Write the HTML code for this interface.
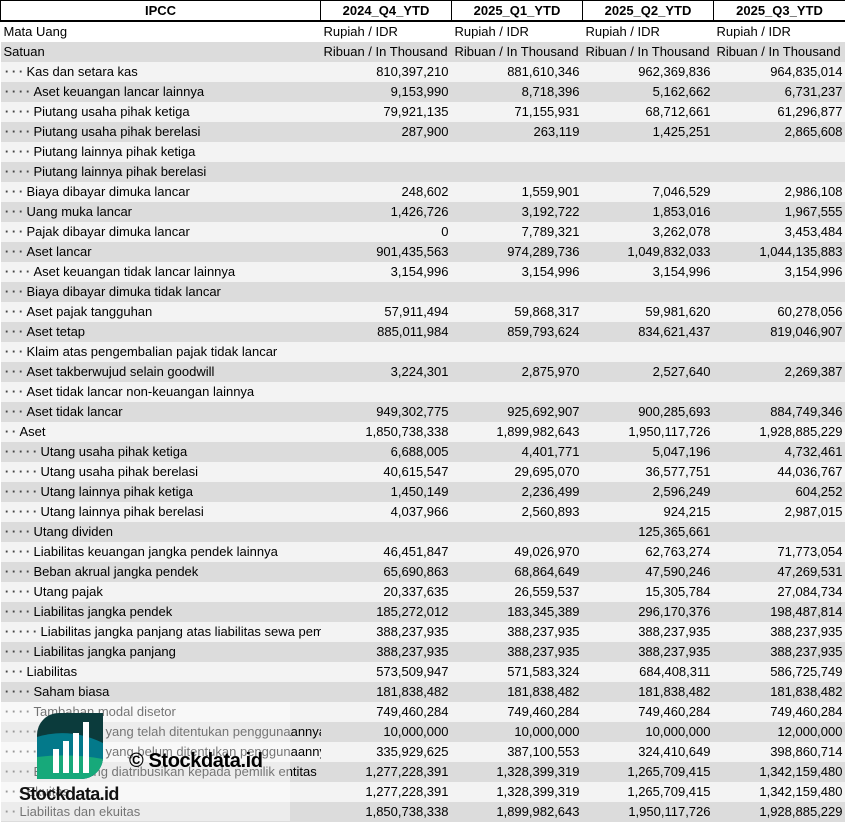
<!DOCTYPE html>
<html><head><meta charset="utf-8"><style>
*{margin:0;padding:0;box-sizing:border-box}
body{width:845px;height:821px;overflow:hidden;background:#fff;font-family:"Liberation Sans",Arial,sans-serif;font-size:13px;color:#000;position:relative}
table{border-collapse:collapse;table-layout:fixed;width:845px}
td{height:20px;white-space:nowrap;overflow:hidden;padding:0 3px;line-height:20px}
td.n{text-align:right}
tr.h td{font-weight:bold;text-align:center;border:1px solid #000;border-bottom:2px solid #000;height:20px;line-height:17px;background:#fff}
tr.l td{background:#f3f3f3}
tr.w td{background:#fff}
tr.g td{background:#dcdcdc}
.d{display:inline-block;width:7px;text-align:center;font-weight:bold;color:#444}
.t{margin-left:2px}
#ov{position:absolute;left:0;top:702px;width:290px;height:119px;background:rgba(255,255,255,0.45)}
</style></head><body>
<table>
<colgroup><col style="width:320px"><col style="width:131px"><col style="width:131px"><col style="width:131px"><col style="width:132px"></colgroup>
<tr class="h"><td>IPCC</td><td>2024_Q4_YTD</td><td>2025_Q1_YTD</td><td>2025_Q2_YTD</td><td>2025_Q3_YTD</td></tr>
<tr class="w"><td>Mata Uang</td><td>Rupiah / IDR</td><td>Rupiah / IDR</td><td>Rupiah / IDR</td><td>Rupiah / IDR</td></tr>
<tr class="g"><td>Satuan</td><td>Ribuan / In Thousand</td><td>Ribuan / In Thousand</td><td>Ribuan / In Thousand</td><td>Ribuan / In Thousand</td></tr>
<tbody id="b"></tbody>
</table>
<div id="ov"></div>
<svg style="position:absolute;left:37px;top:713px" width="66" height="66" viewBox="0 0 66 66">
<defs><clipPath id="c"><path d="M22 0H66V44A22 22 0 0 1 44 66H0V22A22 22 0 0 1 22 0Z"/></clipPath></defs>
<g clip-path="url(#c)">
<rect width="66" height="66" fill="#0b3b3c"/>
<path d="M0 24Q33 14 66 30V66H0Z" fill="#03798a"/>
<path d="M0 44Q33 40 66 46V66H0Z" fill="#17a97a"/>
</g>
<rect x="16" y="36" width="6" height="24" fill="#fff"/>
<rect x="26" y="28" width="6" height="32" fill="#fff"/>
<rect x="36" y="20" width="6" height="40" fill="#fff"/>
<rect x="46" y="9" width="6" height="51" fill="#fff"/>
</svg>
<div style="position:absolute;left:129px;top:750px;font-size:20px;font-weight:bold;color:#000;letter-spacing:-0.4px">© Stockdata.id</div>
<div style="position:absolute;left:19px;top:784px;font-size:18px;font-weight:bold;color:#111;letter-spacing:-0.6px">Stockdata.id</div>
<script>
var R=[
[3,"Kas dan setara kas","810,397,210","881,610,346","962,369,836","964,835,014"],
[4,"Aset keuangan lancar lainnya","9,153,990","8,718,396","5,162,662","6,731,237"],
[4,"Piutang usaha pihak ketiga","79,921,135","71,155,931","68,712,661","61,296,877"],
[4,"Piutang usaha pihak berelasi","287,900","263,119","1,425,251","2,865,608"],
[4,"Piutang lainnya pihak ketiga","","","",""],
[4,"Piutang lainnya pihak berelasi","","","",""],
[3,"Biaya dibayar dimuka lancar","248,602","1,559,901","7,046,529","2,986,108"],
[3,"Uang muka lancar","1,426,726","3,192,722","1,853,016","1,967,555"],
[3,"Pajak dibayar dimuka lancar","0","7,789,321","3,262,078","3,453,484"],
[3,"Aset lancar","901,435,563","974,289,736","1,049,832,033","1,044,135,883"],
[4,"Aset keuangan tidak lancar lainnya","3,154,996","3,154,996","3,154,996","3,154,996"],
[3,"Biaya dibayar dimuka tidak lancar","","","",""],
[3,"Aset pajak tangguhan","57,911,494","59,868,317","59,981,620","60,278,056"],
[3,"Aset tetap","885,011,984","859,793,624","834,621,437","819,046,907"],
[3,"Klaim atas pengembalian pajak tidak lancar","","","",""],
[3,"Aset takberwujud selain goodwill","3,224,301","2,875,970","2,527,640","2,269,387"],
[3,"Aset tidak lancar non-keuangan lainnya","","","",""],
[3,"Aset tidak lancar","949,302,775","925,692,907","900,285,693","884,749,346"],
[2,"Aset","1,850,738,338","1,899,982,643","1,950,117,726","1,928,885,229"],
[5,"Utang usaha pihak ketiga","6,688,005","4,401,771","5,047,196","4,732,461"],
[5,"Utang usaha pihak berelasi","40,615,547","29,695,070","36,577,751","44,036,767"],
[5,"Utang lainnya pihak ketiga","1,450,149","2,236,499","2,596,249","604,252"],
[5,"Utang lainnya pihak berelasi","4,037,966","2,560,893","924,215","2,987,015"],
[4,"Utang dividen","","","125,365,661",""],
[4,"Liabilitas keuangan jangka pendek lainnya","46,451,847","49,026,970","62,763,274","71,773,054"],
[4,"Beban akrual jangka pendek","65,690,863","68,864,649","47,590,246","47,269,531"],
[4,"Utang pajak","20,337,635","26,559,537","15,305,784","27,084,734"],
[4,"Liabilitas jangka pendek","185,272,012","183,345,389","296,170,376","198,487,814"],
[5,"Liabilitas jangka panjang atas liabilitas sewa pembiayaan","388,237,935","388,237,935","388,237,935","388,237,935"],
[4,"Liabilitas jangka panjang","388,237,935","388,237,935","388,237,935","388,237,935"],
[3,"Liabilitas","573,509,947","571,583,324","684,408,311","586,725,749"],
[4,"Saham biasa","181,838,482","181,838,482","181,838,482","181,838,482"],
[4,"Tambahan modal disetor","749,460,284","749,460,284","749,460,284","749,460,284"],
[5,"Saldo laba yang telah ditentukan penggunaannya","10,000,000","10,000,000","10,000,000","12,000,000"],
[5,"Saldo laba yang belum ditentukan penggunaannya","335,929,625","387,100,553","324,410,649","398,860,714"],
[4,"Ekuitas yang diatribusikan kepada pemilik entitas induk","1,277,228,391","1,328,399,319","1,265,709,415","1,342,159,480"],
[3,"Ekuitas","1,277,228,391","1,328,399,319","1,265,709,415","1,342,159,480"],
[2,"Liabilitas dan ekuitas","1,850,738,338","1,899,982,643","1,950,117,726","1,928,885,229"]];
var h="";
R.forEach(function(r,i){
 var d="";for(var k=0;k<r[0];k++)d+='<span class="d">·</span>';
 h+='<tr class="'+(i%2?'g':'l')+'"><td>'+d+'<span class="t">'+r[1]+'</span></td><td class="n">'+r[2]+'</td><td class="n">'+r[3]+'</td><td class="n">'+r[4]+'</td><td class="n">'+r[5]+'</td></tr>';
});
document.getElementById("b").innerHTML=h;
</script>
</body></html>
